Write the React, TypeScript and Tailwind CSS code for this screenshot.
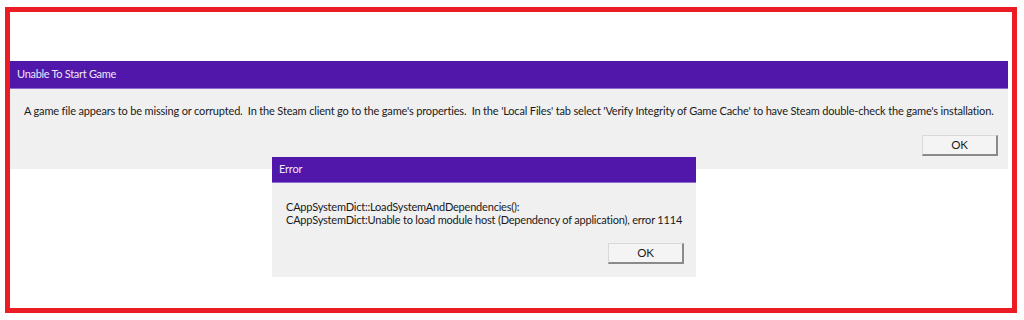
import React from "react";

const font = { fontFamily: 'Lato, "Noto Sans", sans-serif' };

function OkButton() {
  return (
    <div className="w-[76px] h-[21px] flex items-center justify-center bg-[#f4f4f4] border border-t-[#d8d8d8] border-l-[#d8d8d8] border-b-2 border-r-2 border-b-[#8a8a8a] border-r-[#8a8a8a] text-[11.5px] tracking-[-0.1px] text-[#1a1a1a]">
      OK
    </div>
  );
}

export default function App() {
  return (
    <div className="w-[1024px] h-[320px] bg-white pt-[7px] pl-[5px]" style={font}>
      <div className="relative w-[1012px] h-[306px] border-[5px] border-[#ec1c24] bg-white">
        {/* Main dialog */}
        <div className="absolute left-0 top-[49px] w-[998px] flex flex-col">
          <div className="h-[28px] bg-[#5117ab] border-b border-[#8f6ad0] flex items-center pl-[7px] text-[11px] tracking-[-0.3px] text-[#ece6f7]">
            Unable To Start Game
          </div>
          <div className="h-[80px] bg-[#f0f0f0] flex flex-col">
            <div className="pl-[14px] pt-[14px] text-[11px] tracking-[-0.165px] text-[#1a1a1a] whitespace-pre leading-[16px]">
              {"A game file appears to be missing or corrupted.  In the Steam client go to the game's properties.  In the 'Local Files' tab select 'Verify Integrity of Game Cache' to have Steam double-check the game's installation."}
            </div>
            <div className="flex justify-end pr-[10px] mt-[16px]">
              <OkButton />
            </div>
          </div>
        </div>

        {/* Error dialog */}
        <div className="absolute left-[262px] top-[145px] w-[424px] flex flex-col">
          <div className="h-[26px] bg-[#5117ab] border-b border-[#8f6ad0] flex items-center pl-[7px] text-[11px] tracking-[-0.2px] text-[#ece6f7]">
            Error
          </div>
          <div className="h-[94px] bg-[#f0f0f0] flex flex-col">
            <div className="pl-[14px] pt-[17px] text-[11px] tracking-[-0.2px] text-[#1a1a1a] leading-[13px] whitespace-nowrap">
              <div>CAppSystemDict::LoadSystemAndDependencies():</div>
              <div>CAppSystemDict:Unable to load module host (Dependency of application), error 1114</div>
            </div>
            <div className="flex justify-end pr-[12px] mt-[17px]">
              <OkButton />
            </div>
          </div>
        </div>
      </div>
    </div>
  );
}
